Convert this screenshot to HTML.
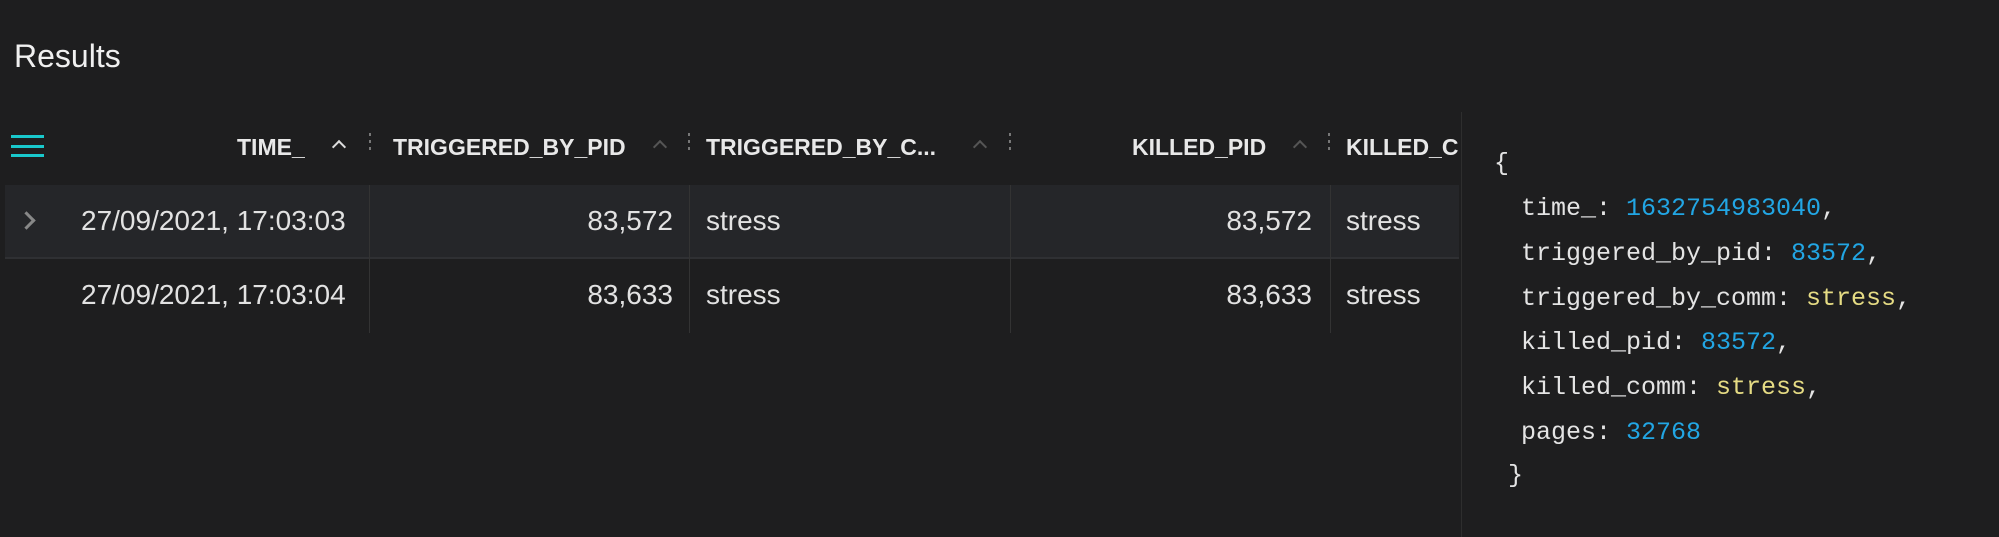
<!DOCTYPE html>
<html><head><style>
body{margin:0;width:1999px;height:537px;background:#1e1e1f;overflow:hidden;position:relative;font-family:"Liberation Sans",sans-serif;color:#e4e4e4}
.a{position:absolute;white-space:nowrap}
.h{font-size:23px;font-weight:bold;top:134px;color:#e8e8e8}
.d{font-size:28px;color:#e2e2e2}
.car{position:absolute;top:142px;width:8px;height:8px;border-left:2px solid #555;border-top:2px solid #555;transform:rotate(45deg)}
.dots{position:absolute;top:133px;width:2px;height:20px;background:repeating-linear-gradient(#777 0 3px,transparent 3px 7px)}
.vl{position:absolute;width:1px;background:#333}
.m{font-family:"Liberation Mono",monospace;font-size:25px;color:#e4e4e4;left:1521px}
.n{color:#22a6e4}.s{color:#e6dc84}
</style></head><body>
<div class="a" style="left:14px;top:38px;font-size:32px;color:#f0f0f0">Results</div>
<div style="position:absolute;left:11px;top:135px;width:33px;height:3px;background:#19c8cc"></div>
<div style="position:absolute;left:11px;top:145px;width:33px;height:3px;background:#19c8cc"></div>
<div style="position:absolute;left:11px;top:154px;width:33px;height:3px;background:#19c8cc"></div>
<div class="a h" style="left:237px">TIME_</div><div class="car" style="left:334px;border-color:#ddd"></div>
<div class="dots" style="left:369px"></div>
<div class="a h" style="left:393px">TRIGGERED_BY_PID</div><div class="car" style="left:655px"></div>
<div class="dots" style="left:688px"></div>
<div class="a h" style="left:706px">TRIGGERED_BY_C...</div><div class="car" style="left:975px"></div>
<div class="dots" style="left:1009px"></div>
<div class="a h" style="left:1132px">KILLED_PID</div><div class="car" style="left:1295px"></div>
<div class="dots" style="left:1328px"></div>
<div class="a h" style="left:1346px;width:113px;overflow:hidden">KILLED_COMM</div>
<div style="position:absolute;left:5px;top:185px;width:1454px;height:72px;background:#252629"></div>
<div style="position:absolute;left:5px;top:257px;width:1454px;height:2px;background:#2f3033"></div>
<div class="vl" style="left:369px;top:185px;height:148px"></div>
<div class="vl" style="left:689px;top:185px;height:148px"></div>
<div class="vl" style="left:1010px;top:185px;height:148px"></div>
<div class="vl" style="left:1330px;top:185px;height:148px"></div>
<div class="vl" style="left:1461px;top:112px;height:425px;background:#2e2e2e"></div>
<div style="position:absolute;left:20px;top:214px;width:10px;height:10px;border-right:3px solid #888;border-top:3px solid #888;transform:rotate(45deg)"></div>
<div class="a d" style="left:81px;top:205px">27/09/2021, 17:03:03</div>
<div class="a d" style="right:1326px;top:205px">83,572</div>
<div class="a d" style="left:706px;top:205px">stress</div>
<div class="a d" style="right:687px;top:205px">83,572</div>
<div class="a d" style="left:1346px;top:205px">stress</div>
<div class="a d" style="left:81px;top:279px">27/09/2021, 17:03:04</div>
<div class="a d" style="right:1326px;top:279px">83,633</div>
<div class="a d" style="left:706px;top:279px">stress</div>
<div class="a d" style="right:687px;top:279px">83,633</div>
<div class="a d" style="left:1346px;top:279px">stress</div>
<div class="a m" style="left:1494px;top:149px">{</div>
<div class="a m" style="top:194px">time_: <span class="n">1632754983040</span>,</div>
<div class="a m" style="top:239px">triggered_by_pid: <span class="n">83572</span>,</div>
<div class="a m" style="top:284px">triggered_by_comm: <span class="s">stress</span>,</div>
<div class="a m" style="top:328px">killed_pid: <span class="n">83572</span>,</div>
<div class="a m" style="top:373px">killed_comm: <span class="s">stress</span>,</div>
<div class="a m" style="top:418px">pages: <span class="n">32768</span></div>
<div class="a m" style="left:1508px;top:461px">}</div>
</body></html>
